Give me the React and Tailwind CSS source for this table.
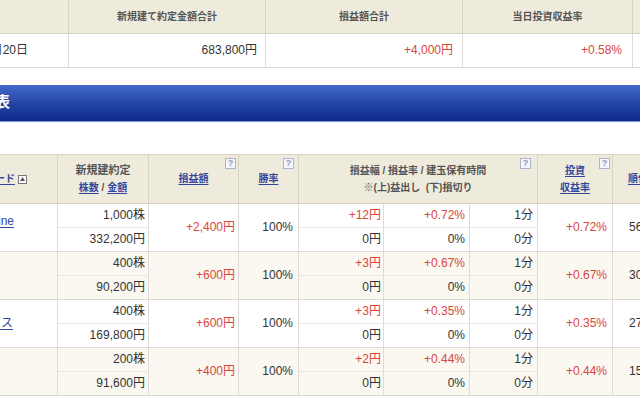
import React from 'react';

const rows = [
  { name: 'Sansan Online', pad: 'pr-[43px] pb-[12px]', shares: '1,000株', amount: '332,200円', pl: '+2,400円', up: ['+12円', '+0.72%', '1分'], ret: '+0.72%', rank: '56位', bg: 'bg-white' },
  { name: 'ＵＵＵＭ', pad: 'pr-[70px]', shares: '400株', amount: '90,200円', pl: '+600円', up: ['+3円', '+0.67%', '1分'], ret: '+0.67%', rank: '30位', bg: 'bg-[#faf8f1]' },
  { name: 'ピアラサービス', pad: 'pr-[44px]', shares: '400株', amount: '169,800円', pl: '+600円', up: ['+3円', '+0.35%', '1分'], ret: '+0.35%', rank: '27位', bg: 'bg-white' },
  { name: 'ＢＡＳＥ', pad: 'pr-[70px]', shares: '200株', amount: '91,600円', pl: '+400円', up: ['+2円', '+0.44%', '1分'], ret: '+0.44%', rank: '15位', bg: 'bg-[#faf8f1]' },
];

const Help = ({ pos }) => (
  <span className={`absolute top-[3px] ${pos} w-[11px] h-[11px] border border-[#aab6cf] bg-[#f4f6fb] text-[#8d9bbd] text-[9px] leading-[9px] font-bold flex items-center justify-center`}>
    ?
  </span>
);

const th = 'border border-[#d9d4c2] bg-[#efebdc] text-[10px] font-bold text-[#555] align-middle';
const cell = 'border border-[#dedbd2] text-[12px] text-[#333] align-middle whitespace-nowrap';
const td = `${cell} text-right`;
const red = 'text-[#d9463e]';
const link = 'text-[#34469c] underline underline-offset-2';

export default function App() {
  return (
    <div className="w-[640px] h-[396px] overflow-hidden bg-white" style={{ fontFamily: '"Liberation Sans", "Noto Sans CJK JP", sans-serif' }}>
      <div className="-ml-[80px] w-[800px]">
        {/* summary */}
        <table className="table-fixed border-collapse w-[800px]">
          <colgroup>
            <col className="w-[148px]" />
            <col className="w-[197px]" />
            <col className="w-[197px]" />
            <col className="w-[170px]" />
            <col className="w-[88px]" />
          </colgroup>
          <thead>
            <tr className="h-[33px]">
              <th className={`${th} border-t-0 text-left pl-[40px]`}>日付</th>
              <th className={`${th} border-t-0`}>新規建て約定金額合計</th>
              <th className={`${th} border-t-0`}>損益額合計</th>
              <th className={`${th} border-t-0`}>当日投資収益率</th>
              <th className={`${th} border-t-0`}>約定件数</th>
            </tr>
          </thead>
          <tbody>
            <tr className="h-[34px]">
              <td className={`${td} pr-[40px]`}>2020年1月20日</td>
              <td className={`${td} pr-[8px]`}>683,800円</td>
              <td className={`${td} pr-[9px] ${red}`}>+4,000円</td>
              <td className={`${td} pr-[10px] ${red}`}>+0.58%</td>
              <td className={`${td} pr-[10px]`}>4件</td>
            </tr>
          </tbody>
        </table>

        {/* section bar */}
        <div className="mt-[17px] h-[37px] flex items-center pl-[45px] bg-gradient-to-b from-[#4469c8] via-[#2446a8] to-[#0e2b8c] border-b border-[#7f93cc]">
          <span className="text-white text-[15px] font-bold">損益表</span>
        </div>

        {/* detail table */}
        <table className="table-fixed border-collapse w-[800px] mt-[32px]">
          <colgroup>
            <col className="w-[137px]" />
            <col className="w-[91px]" />
            <col className="w-[90px]" />
            <col className="w-[60px]" />
            <col className="w-[85px]" />
            <col className="w-[86px]" />
            <col className="w-[68px]" />
            <col className="w-[75px]" />
            <col className="w-[108px]" />
          </colgroup>
          <thead>
            <tr className="h-[49px]">
              <th className={`${th} text-right pr-[30px] whitespace-nowrap`}>
                <span className={link}>銘柄コード</span>
                <span className="inline-flex ml-[3px] w-[9px] h-[9px] border border-[#777] bg-white items-center justify-center align-middle">
                  <svg width="5" height="4" viewBox="0 0 5 4"><path d="M2.5 0L5 4H0z" fill="#555" /></svg>
                </span>
              </th>
              <th className={`${th} leading-[17px]`}>
                <div className="text-[11px]">新規建約定</div>
                <div><span className={link}>株数</span> / <span className={link}>金額</span></div>
              </th>
              <th className={`${th} relative`}>
                <span className={link}>損益額</span>
                <Help pos="right-[2px]" />
              </th>
              <th className={`${th} relative`}>
                <span className={link}>勝率</span>
                <Help pos="right-[4px]" />
              </th>
              <th colSpan={3} className={`${th} relative leading-[17px]`}>
                <div>損益幅 / 損益率 / 建玉保有時間</div>
                <div>※(上)益出し &nbsp;(下)損切り</div>
                <Help pos="right-[6px]" />
              </th>
              <th className={`${th} relative leading-[17px]`}>
                <div><span className={link}>投資</span></div>
                <div><span className={link}>収益率</span></div>
                <Help pos="right-[2px]" />
              </th>
              <th className={`${th} text-left pl-[15px]`}>
                <span className={link}>順位</span>
              </th>
            </tr>
          </thead>
          <tbody>
            {rows.map((r) => (
              <React.Fragment key={r.name}>
                <tr className={`h-[24px] ${r.bg}`}>
                  <td rowSpan={2} className={`${td} ${r.pad}`}>
                    <span className={link}>{r.name}</span>
                  </td>
                  <td className={`${td} pr-[3px] border-b-[#ebe8df]`}>{r.shares}</td>
                  <td rowSpan={2} className={`${td} pr-[3px] ${red}`}>{r.pl}</td>
                  <td rowSpan={2} className={`${td} pr-[5px]`}>100%</td>
                  <td className={`${td} pr-[2px] ${red} border-b-[#ebe8df]`}>{r.up[0]}</td>
                  <td className={`${td} pr-[4px] ${red} border-b-[#ebe8df]`}>{r.up[1]}</td>
                  <td className={`${td} pr-[4px] border-b-[#ebe8df]`}>{r.up[2]}</td>
                  <td rowSpan={2} className={`${td} pr-[5px] ${red}`}>{r.ret}</td>
                  <td rowSpan={2} className={`${cell} text-left pl-[16px]`}>{r.rank}</td>
                </tr>
                <tr className={`h-[24px] ${r.bg}`}>
                  <td className={`${td} pr-[3px]`}>{r.amount}</td>
                  <td className={`${td} pr-[2px]`}>0円</td>
                  <td className={`${td} pr-[4px]`}>0%</td>
                  <td className={`${td} pr-[4px]`}>0分</td>
                </tr>
              </React.Fragment>
            ))}
          </tbody>
        </table>
      </div>
    </div>
  );
}
